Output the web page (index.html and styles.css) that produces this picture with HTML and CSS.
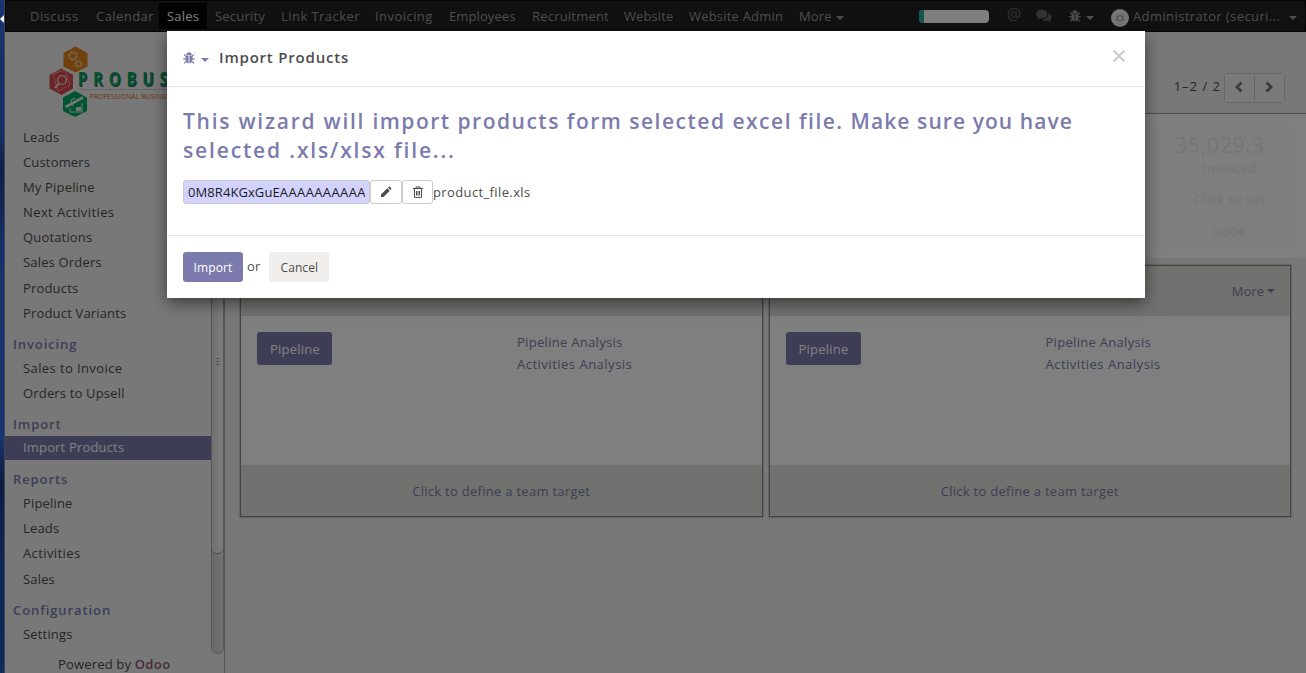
FILE: index.html
```html
<!DOCTYPE html>
<html lang="en">
<head>
<meta charset="utf-8">
<title>Import Products - Odoo</title>
<link rel="stylesheet" href="styles.css">
</head>
<body>
<svg class="defs" width="0" height="0">
  <symbol id="bug" viewBox="0 0 12 12"><path d="M3.400 3 A2.600 2.800 0 0 1 8.600 3 Z M2.600 3.600 H5.600 V11.600 Q2.600 11.200 2.600 7.600 Z M9.400 3.600 V7.600 Q9.400 11.200 6.400 11.600 V3.600 Z"/><path d="M.2 6.900H3 M9 6.900H11.800 M1 2.400L3.400 4.800 M11 2.400L8.600 4.800 M1 11.400L3.600 8.800 M11 11.400L8.400 8.800" stroke="currentColor" stroke-width="1.200" fill="none"/></symbol>
</svg>
<div class="screen">
  <div class="desktop"><i class="pointer"></i></div>
  <div class="app">
    <header class="navbar">
      <nav class="menu">
        <a class="m1">Discuss</a><a class="m2">Calendar</a><a class="m3 active">Sales</a><a class="m4">Security</a><a class="m5">Link Tracker</a><a class="m6">Invoicing</a><a class="m7">Employees</a><a class="m8">Recruitment</a><a class="m9">Website</a><a class="m10">Website Admin</a><a class="m11">More<i class="caret"></i></a>
      </nav>
      <div class="systray">
        <div class="progress"><i></i></div>
        <span class="at">@</span>
        <svg class="chat" viewBox="0 0 16 14"><path d="M6 .8C9.200 .8 11.500 2.600 11.500 5S9.200 9.200 6 9.200C5.500 9.200 5 9.150 4.600 9.050C3.500 9.900 2.300 10.200 1.300 10.300C1.900 9.700 2.200 9.100 2.300 8.400C1 7.600 .3 6.400 .3 5C.3 2.600 2.800 .8 6 .8ZM12.500 4.200C14.500 4.800 15.800 6.200 15.800 7.800C15.800 9 15 10.200 13.900 10.900C14 11.600 14.300 12.300 14.900 12.900C13.700 12.800 12.600 12.400 11.600 11.600C9.500 12 7.300 11.500 6 10.200C9.700 10.300 12.800 7.800 12.500 4.200Z"/></svg>
        <span class="debug"><svg viewBox="0 0 12 12"><use href="#bug"/></svg><i class="caret"></i></span>
        <span class="avatar"><svg viewBox="0 0 10 8"><path d="M1 1.500H3L3.800 .5H6.200L7 1.500H9V7H1Z M5 2.400A1.800 1.800 0 1 0 5 6A1.800 1.800 0 1 0 5 2.400Z"/></svg></span>
        <span class="user">Administrator (securi...</span><i class="caret"></i>
      </div>
    </header>
    <div class="body">
      <aside class="sidebar">
        <div class="side-menu">
          <svg class="logo" viewBox="0 0 170 84" width="170" height="84">
            <polygon points="26.500,6.500 38.500,13 38.500,26.500 26.500,32.500 14.500,26.500 14.500,13" fill="#e08215"/>
            <polygon points="12.500,28.500 24,35 24,48.500 12.500,55 .5,48.500 .5,35" fill="#d8494c"/>
            <polygon points="26,51 38,57.500 38,71 26,77 14,71 14,57.500" fill="#00a862"/>
            <g fill="none" stroke="#f4dfc5"><circle cx="24" cy="16" r="3.300"/><circle cx="24" cy="16" r="4.700" stroke-dasharray="1.700 2"/><circle cx="29.500" cy="24" r="2.500"/><circle cx="29.500" cy="24" r="3.900" stroke-dasharray="1.500 1.600"/></g>
            <g fill="none" stroke="#f4d4d4"><path d="M4 34L16 29.500L21 45L9 51Z" stroke-width=".6"/><circle cx="13" cy="40" r="4.400" stroke-width="1.400"/><path d="M10 43.500L6 48" stroke-width="2.200"/></g>
            <g stroke="#d8f4e6" fill="none"><path d="M16.500 67L34 57.500" stroke-width="2.600"/><path d="M21 68V72H33V63M24 66L22 60L26 58" stroke-width="1.100"/><path d="M27 67H32V71H27Z" fill="#d8f4e6" stroke="none"/></g>
            <g transform="scale(.8 1)"><text class="brand-shadow" x="37" y="47">PROBUS</text><text class="brand" x="36" y="46">PROBUS</text></g>
            <path d="M31 49.500H170" stroke="#ccc"/>
            <text class="brand-sub" x="40.500" y="59">PROFESSIONAL BUSINESS</text>
          </svg>
          <a>Leads</a><a>Customers</a><a>My Pipeline</a><a class="wide">Next Activities</a><a>Quotations</a><a>Sales Orders</a><a>Products</a><a>Product Variants</a>
          <h4>Invoicing</h4><a class="wide">Sales to Invoice</a><a>Orders to Upsell</a>
          <h4>Import</h4><a class="current">Import Products</a>
          <h4>Reports</h4><a>Pipeline</a><a>Leads</a><a class="wide">Activities</a><a>Sales</a>
          <h4>Configuration</h4><a>Settings</a>
          <div class="powered">Powered by <b>Odoo</b></div>
        </div>
        <div class="scrollbar"><div class="thumb"><i></i><i></i><i></i></div></div>
      </aside>
      <main class="main">
        <div class="control"><span class="pager">1–2 / 2</span><div class="pager-btns"><button><svg viewBox="0 0 10 12"><path d="M7.500 1.500L3 6L7.500 10.500"/></svg></button><button><svg viewBox="0 0 10 12"><path d="M2.500 1.500L7 6L2.500 10.500"/></svg></button></div></div>
        <div class="stats">
          <div class="stat"></div>
          <div class="stat"><div class="big">35,029.3<sup>...</sup></div><div class="label">Invoiced</div><div class="set">Click to set</div><div class="target">0.00€</div></div>
        </div>
        <div class="teams">
          <section class="team"><header></header><div class="team-body"><button class="pipe">Pipeline</button><div class="links"><a>Pipeline Analysis</a><a class="wide">Activities Analysis</a></div></div><footer>Click to define a team target</footer></section>
          <section class="team"><header>More<i class="caret"></i></header><div class="team-body"><button class="pipe">Pipeline</button><div class="links"><a>Pipeline Analysis</a><a class="wide">Activities Analysis</a></div></div><footer>Click to define a team target</footer></section>
        </div>
      </main>
    </div>
  </div>
  <div class="overlay"></div>
  <div class="modal">
    <div class="modal-header"><svg class="mbug" viewBox="0 0 12 12"><use href="#bug"/></svg><i class="caret"></i><h3>Import Products</h3><svg class="close" viewBox="0 0 14 14"><path d="M1.500 1.500L12.500 12.500M12.500 1.500L1.500 12.500"/></svg></div>
    <div class="modal-body">
      <h2><span class="loose">This wizard will </span>import products form selected excel file. <span class="tight">Make sure you have</span><br><span class="second">selected .xls/xlsx file...</span></h2>
      <div class="file"><span class="field"><span class="value">0M8R4KGxGuE<span class="tail">AAAAAAAAAAA</span></span></span><button class="edit"><svg viewBox="0 0 12 12"><path d="M1 8.500L7.300 2.200L9.800 4.700L3.500 11H1Z M8 1.500L8.800 .7Q9.500 .3 10.200 .9L11.200 1.900Q11.700 2.600 11.200 3.300L10.500 4Z"/></svg></button><button class="trash"><svg viewBox="0 0 12 12"><path d="M1 2.500H11M4 2.500V1H8V2.500M2.500 3V11.400H9.500V3M4.500 5V9.500M6 5V9.500M7.500 5V9.500" fill="none" stroke="currentColor"/></svg></button><span class="fname">product_file.xls</span></div>
    </div>
    <div class="modal-footer"><button class="primary">Import</button><span>or</span><button class="cancel">Cancel</button></div>
  </div>
</div>
</body>
</html>
```
FILE: styles.css
```css
* { box-sizing: border-box; }
body { margin: 0; font: 13px/1.3 "Open Sans", "Noto Sans", sans-serif; color: #4c4c4c; letter-spacing: .35px; }
button { font: inherit; letter-spacing: inherit; color: inherit; padding: 0; border: 0; display: flex; align-items: center; justify-content: center; }
h2, h3, h4 { margin: 0; }
.defs { position: absolute; }
.screen { position: relative; display: flex; width: 1306px; height: 673px; overflow: hidden; }
.desktop { width: 5px; padding-top: 15px; border-right: 1px solid #3c4658; background: linear-gradient(#173470, #152f68 20%, #0f1f47 25%, #17316c 38%, #183570 65%, #0c1a3c 72%, #0e2352 78%, #102a5c); }
.pointer { display: block; border: 4px solid transparent; border-left: 0; border-right-color: #fff; }
.app { width: 1301px; display: flex; flex-direction: column; }
.navbar { height: 32px; flex: none; display: flex; justify-content: space-between; background: #222; border: 1px solid #060606; color: #9d9d9d; }
.menu { display: flex; padding: 2px 0 0 16px; letter-spacing: .45px; }
.menu a { display: flex; align-items: center; height: 26px; padding: 0 0 0 8px; white-space: nowrap; }
.menu .active { background: #060606; color: #fff; letter-spacing: .2px; }
.m1 { width: 66px; } .m2 { width: 71px; } .m3 { width: 48px; } .m4 { width: 66px; letter-spacing: .2px; } .m5 { width: 94px; } .m6 { width: 74px; } .m7 { width: 83px; letter-spacing: .1px; } .m8 { width: 92px; letter-spacing: .2px; } .m9 { width: 65px; letter-spacing: .1px; } .m10 { width: 110px; letter-spacing: .2px; } .m11 { width: 60px; letter-spacing: .1px; }
.caret { display: inline-block; border: 4px solid transparent; border-bottom: 0; border-top-color: currentColor; margin-left: 5px; }
.menu .caret, .systray .caret { margin-top: 3px; }
.menu .caret { margin-left: 4px; }
.systray { display: flex; align-items: center; padding-right: 8px; }
.progress { width: 70px; height: 13px; margin-right: 1px; border-radius: 4px; background: #fff; overflow: hidden; }
.progress i { display: block; width: 5px; height: 13px; background: #21b799; }
.at { font-size: 16px; margin: -3px 0 0 17px; color: #666; letter-spacing: 0; }
.chat { width: 16px; height: 14px; margin: 0 17px 0 15px; fill: #666; }
.debug { display: flex; align-items: center; margin-right: 17px; }
.debug svg { width: 12px; height: 12px; fill: currentColor; }
.avatar { width: 18px; height: 18px; border-radius: 50%; background: #eee; margin: 4px 4px 0 0; display: flex; align-items: center; justify-content: center; }
.avatar svg { width: 10px; height: 8px; fill: #bbb; fill-rule: evenodd; }
.user { width: 147px; white-space: nowrap; letter-spacing: .4px; }
.systray > .caret { margin-left: 9px; }
.body { flex: 1; display: flex; background: #f0f0f0; min-height: 0; }
.sidebar { width: 220px; display: flex; border-right: 1px solid #aaa; }
.side-menu { width: 206px; letter-spacing: .17px; }
.logo { display: block; margin: 8px 0 .4px 44px; }
.brand, .brand-shadow { font: bold 19px "Open Sans", sans-serif; letter-spacing: 7.1px; fill: #00a862; }
.brand-shadow { fill: #555; }
.brand-sub { font: 7px "Open Sans", sans-serif; letter-spacing: 0; fill: #d8701c; }
.side-menu a { display: flex; align-items: center; height: 25.2px; padding-left: 18px; white-space: nowrap; }
.side-menu .wide { letter-spacing: .4px; }
.side-menu h4 { height: 29.8px; padding: 9px 0 0 8px; font-size: 13px; line-height: 18px; font-weight: 600; letter-spacing: .9px; color: #7c7bad; }
.side-menu .current { height: 24px; margin-bottom: 1.2px; background: #7c7bad; color: #fff; }
.powered { padding: 9px 0 0 53px; white-space: nowrap; }
.powered b { color: #875a7b; font-weight: 600; letter-spacing: .4px; }
.scrollbar { width: 13px; height: 622px; border: 1px solid #aaa; border-radius: 0 0 7px 7px; background: linear-gradient(90deg, #d2d1cd, #e2e2de); }
.thumb { height: 521px; padding: 325px 0 0 4px; border-bottom: 1px solid #999; border-radius: 0 0 7px 7px; background: linear-gradient(90deg, #e0e0e0, #fafafa); }
.thumb i { display: block; width: 4px; height: 1px; margin-bottom: 2px; background: #aaa; }
.main { flex: 1; min-width: 0; }
.control { height: 82px; border-bottom: 1px solid #9a9a9a; display: flex; justify-content: flex-end; align-items: center; padding: 30px 21px 0 0; }
.pager { margin: -2px 3px 0 0; letter-spacing: 1px; }
.pager-btns { display: flex; border: 1px solid #ccc; border-radius: 3px; height: 30px; width: 61px; }
.pager-btns button { flex: 1; background: #f4f4f4; }
.pager-btns button + button { border-left: 1px solid #ccc; }
.pager-btns svg { width: 10px; height: 12px; margin: -1px 1px 0 0; fill: none; stroke: #777; stroke-width: 2.8; }
.stats { height: 144px; background: #fff; display: flex; justify-content: flex-end; gap: 10px; padding: 11px 16px 10px; }
.stat { width: 120px; background: #fcfcfc; color: #ebebeb; text-align: center; white-space: nowrap; }
.big { font-size: 21px; letter-spacing: .8px; line-height: 28px; padding: 6px 0 0 5px; text-align: left; }
.big sup { font-size: 12px; line-height: 1; margin-left: 2px; }
.label { line-height: 20px; margin-top: -1px; letter-spacing: .4px; }
.set { line-height: 20px; margin-top: 11px; letter-spacing: .5px; }
.target { line-height: 20px; margin-top: 13px; letter-spacing: .3px; padding-right: 2px; }
.teams { display: flex; gap: 6px; padding: 7px 15px 0 15px; }
.team { flex: 1; height: 252px; border: 1px solid #888; box-shadow: 0 0 1px 1px #ccc; background: #fff; color: #7c7bad; display: flex; flex-direction: column; }
.team header { height: 50px; background: #e2e2de; display: flex; align-items: center; justify-content: flex-end; padding-right: 15px; letter-spacing: 0; }
.team header .caret { margin-left: 3px; }
.team-body { flex: 1; display: flex; padding: 16px; }
.pipe { width: 75px; height: 33px; padding: 2px 0 0 1px; border-radius: 3px; background: #7c7bad; color: #fff; letter-spacing: .2px; }
.links { margin: -1px 0 0 185px; display: flex; flex-direction: column; letter-spacing: .3px; }
.links a { line-height: 22px; }
.links .wide { letter-spacing: .5px; }
.team footer { height: 51px; background: #e2e2de; text-align: center; line-height: 53px; letter-spacing: .28px; }
.overlay { position: absolute; inset: 0 0 0 5px; background: rgba(0,0,0,.5); }
.modal { position: absolute; left: 167px; top: 31px; width: 978px; height: 267px; background: #fff; box-shadow: 0 5px 15px rgba(0,0,0,.5); }
.modal-header { height: 56px; border-bottom: 1px solid #e5e5e5; display: flex; align-items: center; padding: 0 19px 3px 16px; }
.mbug { width: 12px; height: 12px; margin-top: 2px; color: #7c7bad; fill: #7c7bad; }
.modal-header .caret { color: #7c7bad; margin: 5px 10px 0 6px; }
.modal-header h3 { flex: 1; padding-top: 1px; font-size: 15px; font-weight: 600; letter-spacing: .8px; }
.close { width: 14px; height: 14px; fill: none; stroke: #ccc; stroke-width: 2.2; margin-top: -2px; }
.modal-body { height: 148px; padding: 20px 16px 0; }
.modal-body h2 { font-size: 21px; line-height: 29px; font-weight: 600; letter-spacing: 1.5px; color: #7c7bad; white-space: nowrap; }
.modal-body .loose { letter-spacing: 1.75px; }
.modal-body .tight { letter-spacing: 1.08px; }
.modal-body .second { letter-spacing: 1.85px; }
.file { display: flex; align-items: center; margin-top: 15px; height: 24px; letter-spacing: .38px; }
.field { width: 187px; height: 24px; border: 1px solid #ccc; border-radius: 3px; background: #d2d2ff; color: #1a1a1a; padding: 0 4px; line-height: 22px; letter-spacing: .08px; }
.value { display: block; overflow: hidden; }
.tail { letter-spacing: .4px; }
.edit, .trash { width: 32px; height: 24px; border: 1px solid #ccc; border-radius: 3px; background: #fff; }
.trash { width: 31px; }
.file svg { width: 12px; height: 12px; fill: currentColor; }
.modal-footer { border-top: 1px solid #e5e5e5; height: 63px; display: flex; align-items: center; padding: 0 16px; letter-spacing: .1px; }
.modal-footer button { width: 60px; height: 30px; padding-top: 2px; border-radius: 3px; font-size: 12px; }
.primary { background: #7c7bad; color: #fff; }
.modal-footer > span { margin: -2px 9px 0 4px; }
.cancel { background: #f0efed; }
```
